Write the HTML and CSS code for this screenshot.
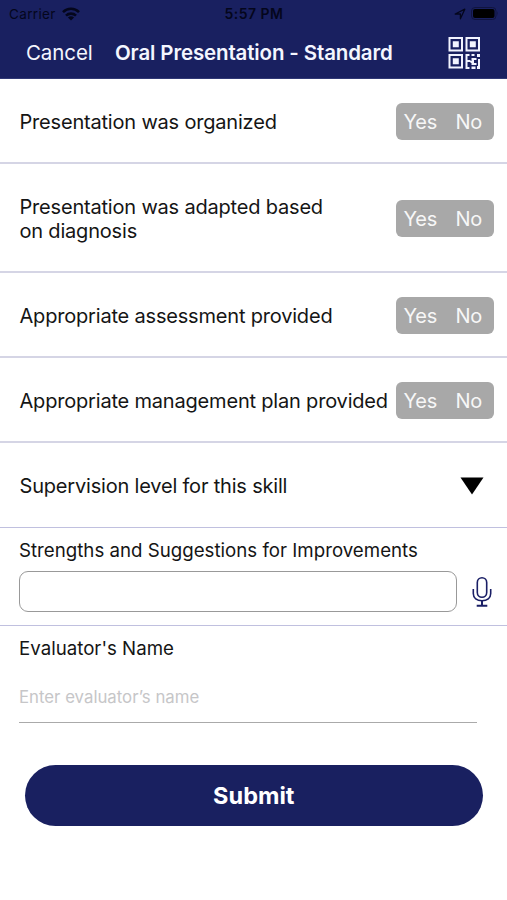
FILE: index.html
```html
<!DOCTYPE html>
<html lang="en">
<head>
<meta charset="utf-8">
<title>Oral Presentation - Standard</title>
<link rel="stylesheet" href="styles.css">
</head>
<body>
<header class="header">
  <div class="status">
    <div class="status-left"><span class="carrier">Carrier</span>
      <svg class="wifi" width="18" height="14" viewBox="0 0 18 14"><g fill="none" stroke="#04061c" stroke-width="2.6"><path d="M1 5.1a11.4 11.4 0 0 1 16 0"/><path d="M4 8.6a7.2 7.2 0 0 1 10 0"/></g><path fill="#04061c" d="M9 13.6 5.9 10.5a4.4 4.4 0 0 1 6.2 0z"/></svg>
    </div>
    <span class="time">5:57 PM</span>
    <div class="status-right">
      <svg width="12" height="12" viewBox="0 0 12 12"><path d="M1.2 6 10.8 1.2 6.4 10.8V6z" fill="none" stroke="#04061c" stroke-width="1.3" stroke-linejoin="round"/></svg>
      <svg width="28" height="13" viewBox="0 0 28 13"><rect x=".5" y=".5" width="24.5" height="12" rx="3.5" fill="none" stroke="#10143f"/><rect x="2" y="2" width="21.5" height="9" rx="2" fill="#000"/><path d="M26 4.3q1.8 2.2 0 4.4z" fill="#10143f"/></svg>
    </div>
  </div>
  <nav class="nav">
    <span class="cancel">Cancel</span>
    <h1 class="title">Oral Presentation - Standard</h1>
    <svg class="qr" width="32" height="32" viewBox="0 0 32 32"><g fill="none" stroke="#f2f4ff" stroke-width="2"><path d="M1.500 1h12.500v12.500H1.500zM18.500 1H31v12.500H18.500zM1.500 18H14v12.500H1.500z"/></g><path fill="#f2f4ff" d="M4.800 4.300h6v6h-6zM21.800 4.300h6v6h-6zM4.800 21.300h6v6h-6zM17.500 17h4v2h-2v4h3v2h-3v5h2v2h-4zM23.500 17h3v2h-3zM29 17h3v3h-3zM23.500 21h5v2H26v3h2.500v2h-5v-2h-1v-2h1zM30 22h2v10h-3v-3h1zM23.500 29.500h4V32h-4z"/></svg>
  </nav>
</header>
<main>
  <section class="row"><p class="label">Presentation was organized</p><div class="toggle"><span class="yes">Yes</span><span>No</span></div></section>
  <section class="row tall"><p class="label">Presentation was adapted based<br>on diagnosis</p><div class="toggle"><span class="yes">Yes</span><span>No</span></div></section>
  <section class="row"><p class="label">Appropriate assessment provided</p><div class="toggle"><span class="yes">Yes</span><span>No</span></div></section>
  <section class="row"><p class="label">Appropriate management plan provided</p><div class="toggle"><span class="yes">Yes</span><span>No</span></div></section>
  <section class="row select"><p class="label">Supervision level for this skill</p>
    <svg width="24" height="18" viewBox="0 0 24 18"><path d="M.5.5h23L12 17.500z"/></svg></section>
  <section class="notes">
    <p class="field-label">Strengths and Suggestions for Improvements</p>
    <div class="notes-line"><div class="box"></div>
      <svg width="20" height="32" viewBox="0 0 20 32"><g fill="none" stroke="#1a1f66" stroke-width="1.6"><rect x="5.300" y="1.800" width="9.400" height="19.500" rx="4.700"/><path d="M1.300 13v4.500c0 4.500 3.600 7.300 8.700 7.300s8.700-2.800 8.700-7.300V13"/><path stroke-width="2" d="M10 25v4.500M4.700 29.800h10.600"/></g></svg>
    </div>
  </section>
  <section class="evaluator">
    <p class="field-label">Evaluator's Name</p>
    <div class="input">Enter evaluator’s name</div>
  </section>
  <div class="submit"><span>Submit</span></div>
</main>
</body>
</html>
```
FILE: styles.css
```css
* { box-sizing: border-box; }
body { margin: 0; background: #fff; color: #151515; font-family: Inter, "Liberation Sans", sans-serif; }
p, h1 { margin: 0; white-space: nowrap; }
.header { height: 79px; background: #192060; border-bottom: 1px solid #303875; }
.status { height: 27px; display: grid; grid-template-columns: 1fr auto 1fr; align-items: center; padding: 0 8px 0 9px; color: #04061c; font-size: 13.5px; }
.status-left, .status-right { display: flex; align-items: center; gap: 6px; }
.status-right { justify-content: flex-end; gap: 5px; }
.carrier { letter-spacing: .35px; }
.time { font-weight: 600; font-size: 14px; letter-spacing: .45px; }
.nav { height: 51px; display: flex; align-items: center; padding: 0 27px 0 26px; color: #f4f6ff; }
.cancel { width: 89px; font-size: 20.5px; letter-spacing: -.1px; }
.title { flex: 1; font-size: 20.5px; font-weight: 600; letter-spacing: -.14px; }
.row { height: 85px; display: flex; align-items: center; justify-content: space-between; padding: 2px 13.5px 0 19.5px; border-bottom: 2px solid #d5d5e5; }
.tall { height: 109px; }
.select { padding: 1px 23.5px 0 19.5px; border-bottom: 1px solid #c0c0df; }
.label { font-size: 20px; line-height: 24px; letter-spacing: -.19px; }
.toggle { width: 98px; height: 37px; flex: none; display: flex; align-items: center; padding-left: 8px; border-radius: 6px; background: #a8a8a8; color: #f7f7f7; font-size: 20px; letter-spacing: -.2px; }
.yes { width: 52px; }
.notes { height: 98px; padding: 11px 15px 0 19px; border-bottom: 1px solid #c0c0df; }
.field-label { font-size: 18.7px; line-height: 24px; }
.notes-line { display: flex; align-items: center; justify-content: space-between; margin-top: 8px; }
.box { width: 438px; height: 41px; border: 1.5px solid #999; border-radius: 9px; }
.evaluator { height: 97px; margin: 0 30px 0 19px; padding-top: 11px; border-bottom: 1px solid #aaa; }
.input { margin-top: 24px; font-size: 16.8px; line-height: 24px; color: #c6c6c8; }
.submit { height: 61px; margin: 42px 24.5px 0 25px; display: flex; align-items: center; justify-content: center; border-radius: 31px; background: #192060; color: #fff; font-size: 23.5px; font-weight: 700; }
```
